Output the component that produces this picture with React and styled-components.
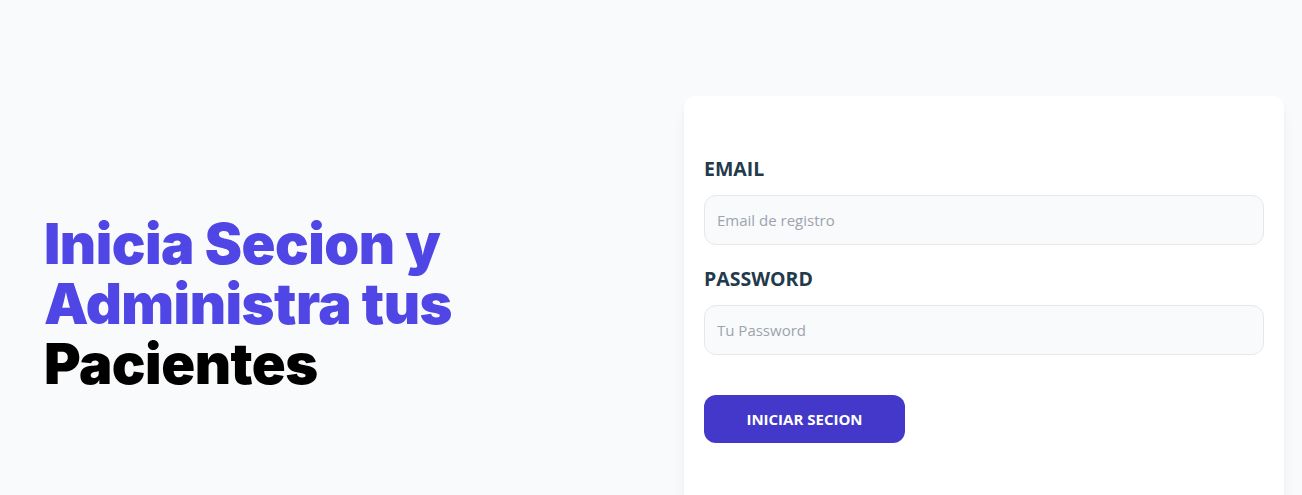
import styled, { createGlobalStyle } from "styled-components";

const GlobalStyle = createGlobalStyle`
	* {
		box-sizing: border-box;
	}
	body {
		margin: 0;
		background-color: #f9fafb;
		font-family: "Open Sans", "Liberation Sans", sans-serif;
	}
`;

const Container = styled.main`
	display: grid;
	grid-template-columns: 600px 600px;
	column-gap: 40px;
	padding: 96px 0 0 44px;
	height: 495px;
	overflow: hidden;
`;

const Heading = styled.h1`
	align-self: start;
	margin: 0;
	padding-top: 118px;
	color: #4f46e5;
	font-family: Inter, "Noto Sans", sans-serif;
	font-weight: 900;
	font-size: 56px;
	line-height: 60px;
	letter-spacing: -0.5px;
`;

const Dark = styled.span`
	color: #000000;
`;

const Card = styled.form`
	align-self: start;
	background-color: #ffffff;
	border-radius: 12px;
	box-shadow: 0 10px 15px -3px rgba(0, 0, 0, 0.08),
		0 4px 6px -2px rgba(0, 0, 0, 0.04);
	padding: 39px 20px 40px;
	min-height: 420px;
`;

const Field = styled.div`
	margin: 20px 0;
`;

const Label = styled.label`
	display: block;
	text-transform: uppercase;
	color: #233a4c;
	font-size: 19.5px;
	line-height: 28px;
	font-weight: 700;
`;

const Input = styled.input`
	display: block;
	width: 100%;
	margin-top: 12px;
	padding: 12px;
	height: 50px;
	border: 1px solid #e5e7eb;
	border-radius: 12px;
	background-color: #f9fafb;
	font-family: inherit;
	font-size: 15px;
	line-height: 24px;
	color: #111827;
	outline: none;

	&::placeholder {
		color: #9ca3af;
	}
`;

const Button = styled.button`
	margin-top: 20px;
	width: 201px;
	height: 48px;
	border: none;
	border-radius: 12px;
	background-color: #4338ca;
	color: #ffffff;
	font-family: inherit;
	font-weight: 700;
	font-size: 15px;
	text-transform: uppercase;
	cursor: pointer;
`;

export default function App() {
	return (
		<>
			<GlobalStyle />
			<Container>
				<Heading>
					Inicia Secion y Administra tus <Dark>Pacientes</Dark>
				</Heading>
				<Card onSubmit={(e) => e.preventDefault()}>
					<Field>
						<Label htmlFor="email">Email</Label>
						<Input id="email" type="email" placeholder="Email de registro" />
					</Field>
					<Field>
						<Label htmlFor="password">Password</Label>
						<Input id="password" type="password" placeholder="Tu Password" />
					</Field>
					<Button type="submit">Iniciar Secion</Button>
				</Card>
			</Container>
		</>
	);
}
